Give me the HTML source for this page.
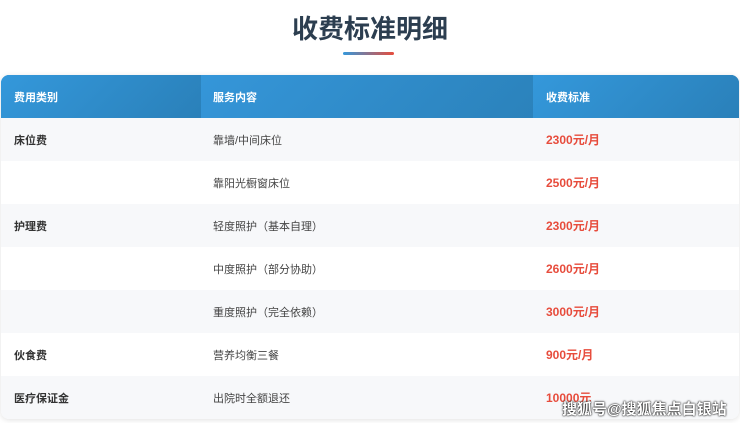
<!DOCTYPE html>
<html><head><meta charset="utf-8"><style>
*{margin:0;padding:0;box-sizing:border-box}
body{width:740px;height:423px;background:#fff;font-family:"Liberation Sans","Noto Sans CJK SC",sans-serif;overflow:hidden;position:relative}
h1{position:absolute;top:9px;left:0;width:740px;text-align:center;font-size:26px;font-weight:700;color:#2c3e50}
.bar{position:absolute;left:343px;top:52px;width:51px;height:3px;border-radius:2px;background:linear-gradient(90deg,#3498db,#e74c3c)}
.tbl{position:absolute;left:1px;top:75px;width:738px;height:344px;border-radius:8px;overflow:hidden;box-shadow:0 1px 6px rgba(0,0,0,.12)}
.row{display:flex;height:43px;align-items:center;font-size:11px;color:#333}
.row div{height:100%;display:flex;align-items:center}
.c1{width:200px;padding-left:13px;font-weight:700}
.c2{width:332px;padding-left:12px;color:#444}
.c3{flex:1;padding-left:13px;color:#e74c3c;font-weight:700;font-size:12px}
.hd{background:linear-gradient(90deg,#3498db,#2a80b9);color:#fff;font-weight:700}
.hd div{color:#fff!important;font-weight:700;font-size:11px}
.hd .c1{background:linear-gradient(135deg,#3498db,#2a80b9)}
.hd .c2{background:linear-gradient(135deg,#3596d9,#2b82bb)}
.hd .c3{background:linear-gradient(135deg,#3498db,#2a80b9)}
.g{background:#f7f8fa}
.w{background:#fff}
.wm{position:absolute;left:562px;top:398px;font-size:15px;color:#fff;font-weight:700;text-shadow:0 0 2px #000,0 0 1px #000}
</style></head><body>
<h1>收费标准明细</h1>
<div class="bar"></div>
<div class="tbl">
<div class="row hd"><div class="c1">费用类别</div><div class="c2">服务内容</div><div class="c3">收费标准</div></div>
<div class="row g"><div class="c1">床位费</div><div class="c2">靠墙/中间床位</div><div class="c3">2300元/月</div></div>
<div class="row w"><div class="c1"></div><div class="c2">靠阳光橱窗床位</div><div class="c3">2500元/月</div></div>
<div class="row g"><div class="c1">护理费</div><div class="c2">轻度照护（基本自理）</div><div class="c3">2300元/月</div></div>
<div class="row w"><div class="c1"></div><div class="c2">中度照护（部分协助）</div><div class="c3">2600元/月</div></div>
<div class="row g"><div class="c1"></div><div class="c2">重度照护（完全依赖）</div><div class="c3">3000元/月</div></div>
<div class="row w"><div class="c1">伙食费</div><div class="c2">营养均衡三餐</div><div class="c3">900元/月</div></div>
<div class="row g"><div class="c1">医疗保证金</div><div class="c2">出院时全额退还</div><div class="c3">10000元</div></div>
</div>
<div class="wm">搜狐号@搜狐焦点白银站</div>
</body></html>
